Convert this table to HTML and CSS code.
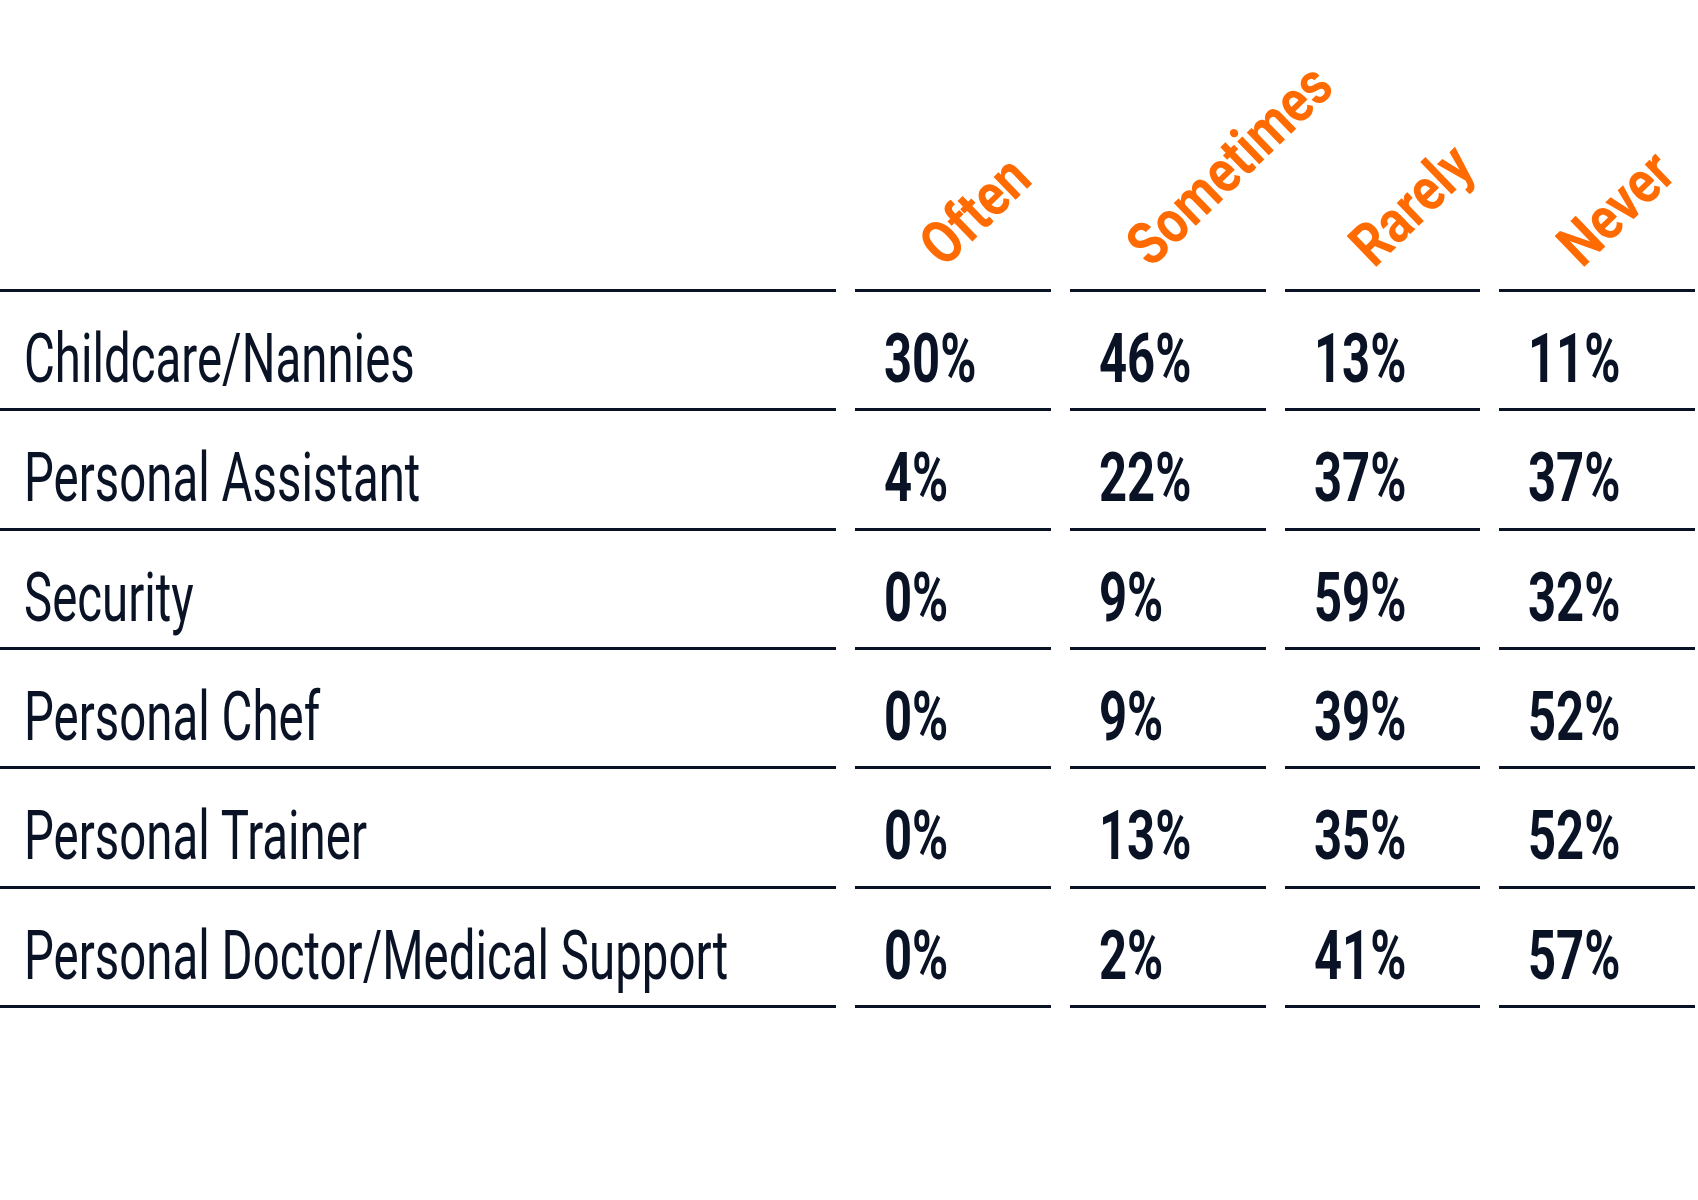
FILE: index.html
```html
<!DOCTYPE html>
<html lang="en">
<head>
<meta charset="utf-8">
<title>Frequency of household staff use</title>
<link rel="stylesheet" href="styles.css">
</head>
<body>
<div class="table">
  <div class="row head">
    <div class="cell"></div>
    <div class="cell hcell h-often"><span class="hl">Often</span></div>
    <div class="cell hcell h-sometimes"><span class="hl">Sometimes</span></div>
    <div class="cell hcell h-rarely"><span class="hl">Rarely</span></div>
    <div class="cell hcell h-never"><span class="hl">Never</span></div>
  </div>
  <div class="row">
    <div class="cell label"><span class="lt">Childcare/Nannies</span></div>
    <div class="cell val"><span class="vt">30%</span></div>
    <div class="cell val"><span class="vt">46%</span></div>
    <div class="cell val"><span class="vt">13%</span></div>
    <div class="cell val"><span class="vt">11%</span></div>
  </div>
  <div class="row">
    <div class="cell label"><span class="lt">Personal Assistant</span></div>
    <div class="cell val"><span class="vt">4%</span></div>
    <div class="cell val"><span class="vt">22%</span></div>
    <div class="cell val"><span class="vt">37%</span></div>
    <div class="cell val"><span class="vt">37%</span></div>
  </div>
  <div class="row">
    <div class="cell label"><span class="lt">Security</span></div>
    <div class="cell val"><span class="vt">0%</span></div>
    <div class="cell val"><span class="vt">9%</span></div>
    <div class="cell val"><span class="vt">59%</span></div>
    <div class="cell val"><span class="vt">32%</span></div>
  </div>
  <div class="row">
    <div class="cell label"><span class="lt">Personal Chef</span></div>
    <div class="cell val"><span class="vt">0%</span></div>
    <div class="cell val"><span class="vt">9%</span></div>
    <div class="cell val"><span class="vt">39%</span></div>
    <div class="cell val"><span class="vt">52%</span></div>
  </div>
  <div class="row">
    <div class="cell label"><span class="lt">Personal Trainer</span></div>
    <div class="cell val"><span class="vt">0%</span></div>
    <div class="cell val"><span class="vt">13%</span></div>
    <div class="cell val"><span class="vt">35%</span></div>
    <div class="cell val"><span class="vt">52%</span></div>
  </div>
  <div class="row">
    <div class="cell label"><span class="lt">Personal Doctor/Medical Support</span></div>
    <div class="cell val"><span class="vt">0%</span></div>
    <div class="cell val"><span class="vt">2%</span></div>
    <div class="cell val"><span class="vt">41%</span></div>
    <div class="cell val"><span class="vt">57%</span></div>
  </div>
</div>
</body>
</html>
```

FILE: styles.css
```css
html, body {
  margin: 0;
  padding: 0;
  background: #ffffff;
}

body {
  font-family: Roboto, "Liberation Sans", sans-serif;
  color: #0a1325;
}

.table {
  width: 1698px;
  height: 1200px;
}

.row {
  display: grid;
  grid-template-columns: 836px repeat(4, 195.75px);
  column-gap: 19px;
  height: 119.33px;
}

.row.head {
  height: 292px;
}

.cell {
  border-bottom: 3px solid #0a1325;
  box-sizing: border-box;
  overflow: visible;
}

.hcell {
  display: flex;
  align-items: flex-end;
  padding-bottom: 10px;
}

.h-often { padding-left: 89px; }
.h-sometimes { padding-left: 81px; }
.h-rarely { padding-left: 89px; }
.h-never { padding-left: 83px; }

.hl {
  display: inline-block;
  font-size: 60px;
  line-height: 60px;
  font-weight: 700;
  color: #ff6b00;
  white-space: nowrap;
  transform-origin: 0 50px;
  transform: rotate(-44deg) scaleX(0.84);
}

.label {
  padding: 32px 0 0 24px;
}

.val {
  padding: 32px 0 0 29px;
}

.lt, .vt {
  display: inline-block;
  font-size: 69px;
  line-height: 69px;
  white-space: nowrap;
  transform-origin: 0 50%;
}

.lt {
  font-weight: 400;
  transform: scaleX(0.687);
}

.vt {
  font-weight: 700;
  transform: scaleX(0.71);
}
```
